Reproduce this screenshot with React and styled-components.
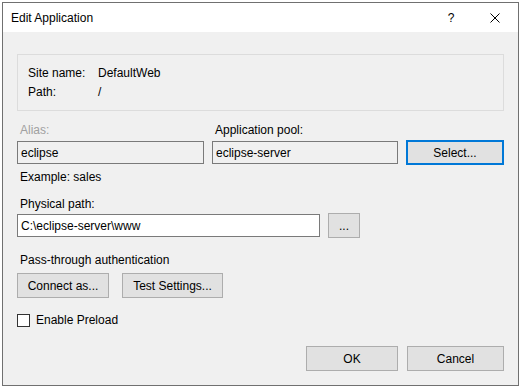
import React from "react";
import styled, { createGlobalStyle } from "styled-components";

const GlobalStyle = createGlobalStyle`
  html, body {
    margin: 0;
    padding: 0;
    background: #ffffff;
  }
  body {
    font-family: "Segoe UI", "Liberation Sans", Arial, sans-serif;
    font-size: 12px;
    color: #000;
  }
  * { box-sizing: border-box; }
`;

const Window = styled.div`
  margin: 2px 0 0 2px;
  width: 517px;
  height: 384px;
  border: 1px solid #707070;
  background: #f0f0f0;
  display: flex;
  flex-direction: column;
`;

const TitleBar = styled.div`
  height: 29px;
  background: #ffffff;
  display: flex;
  align-items: center;
  padding-left: 8px;
`;

const Title = styled.div`
  flex: 1;
  line-height: 16px;
`;

const TitleButton = styled.div`
  width: 46px;
  height: 29px;
  display: flex;
  align-items: center;
  justify-content: center;
  padding-left: ${(p) => p.shift || 0}px;
`;

const Content = styled.div`
  padding: 22px 14px 0 14px;
  display: flex;
  flex-direction: column;
`;

const GroupBox = styled.div`
  border: 1px solid #dcdcdc;
  height: 57px;
  padding: 10px 10px 0 10px;
  display: grid;
  grid-template-columns: 70px 1fr;
  grid-auto-rows: 16px;
  row-gap: 3px;
  line-height: 16px;
`;

const Label = styled.div`
  line-height: 16px;
  color: ${(p) => (p.disabled ? "#a0a0a0" : "#000")};
  margin-top: ${(p) => p.top || 0}px;
  padding-left: 3px;
`;

const FieldGrid = styled.div`
  margin-top: 11px;
  display: grid;
  grid-template-columns: 187px 186px 98px;
  column-gap: 8px;
  row-gap: 2px;
  align-items: center;
`;

const TextBox = styled.div`
  height: 23px;
  width: ${(p) => p.width}px;
  border: 1px solid #7a7a7a;
  background: ${(p) => (p.readOnly ? "#f0f0f0" : "#ffffff")};
  padding-left: 3px;
  display: flex;
  align-items: center;
  white-space: nowrap;
`;

const Button = styled.div`
  height: ${(p) => p.height || 25}px;
  width: ${(p) => p.width}px;
  background: #e1e1e1;
  border: ${(p) => (p.focused ? "2px solid #0078d7" : "1px solid #adadad")};
  display: flex;
  align-items: center;
  justify-content: center;
  white-space: nowrap;
`;

const Row = styled.div`
  display: flex;
  align-items: center;
  gap: ${(p) => p.gap || 8}px;
  margin-top: ${(p) => p.top || 0}px;
  justify-content: ${(p) => (p.right ? "flex-end" : "flex-start")};
`;

const CheckBox = styled.div`
  width: 13px;
  height: 13px;
  border: 1px solid #333333;
  background: #ffffff;
`;

const CheckLabel = styled.label`
  display: flex;
  align-items: center;
  gap: 6px;
  line-height: 16px;
  margin-top: 14px;
`;

function CloseIcon() {
  return (
    <svg width="10" height="10" viewBox="0 0 10 10">
      <path d="M0.5 0.5 L9.5 9.5 M9.5 0.5 L0.5 9.5" stroke="#000" strokeWidth="1" fill="none" />
    </svg>
  );
}

export default function App() {
  return (
    <>
      <GlobalStyle />
      <Window>
        <TitleBar>
          <Title>Edit Application</Title>
          <TitleButton shift={4}>?</TitleButton>
          <TitleButton>
            <CloseIcon />
          </TitleButton>
        </TitleBar>
        <Content>
          <GroupBox>
            <div>Site name:</div>
            <div>DefaultWeb</div>
            <div>Path:</div>
            <div>/</div>
          </GroupBox>

          <FieldGrid>
            <Label disabled>Alias:</Label>
            <Label>Application pool:</Label>
            <div />
            <TextBox readOnly width={187}>eclipse</TextBox>
            <TextBox readOnly width={186}>eclipse-server</TextBox>
            <Button focused width={98}>Select...</Button>
          </FieldGrid>

          <Label top={4}>Example: sales</Label>

          <Label top={11}>Physical path:</Label>
          <Row top={1}>
            <TextBox width={303}>C:\eclipse-server\www</TextBox>
            <Button width={32}>...</Button>
          </Row>

          <Label top={14}>Pass-through authentication</Label>
          <Row top={5} gap={13}>
            <Button width={92}>Connect as...</Button>
            <Button width={101}>Test Settings...</Button>
          </Row>

          <CheckLabel>
            <CheckBox />
            Enable Preload
          </CheckLabel>

          <Row top={18} right gap={9}>
            <Button width={92}>OK</Button>
            <Button width={97}>Cancel</Button>
          </Row>
        </Content>
      </Window>
    </>
  );
}
